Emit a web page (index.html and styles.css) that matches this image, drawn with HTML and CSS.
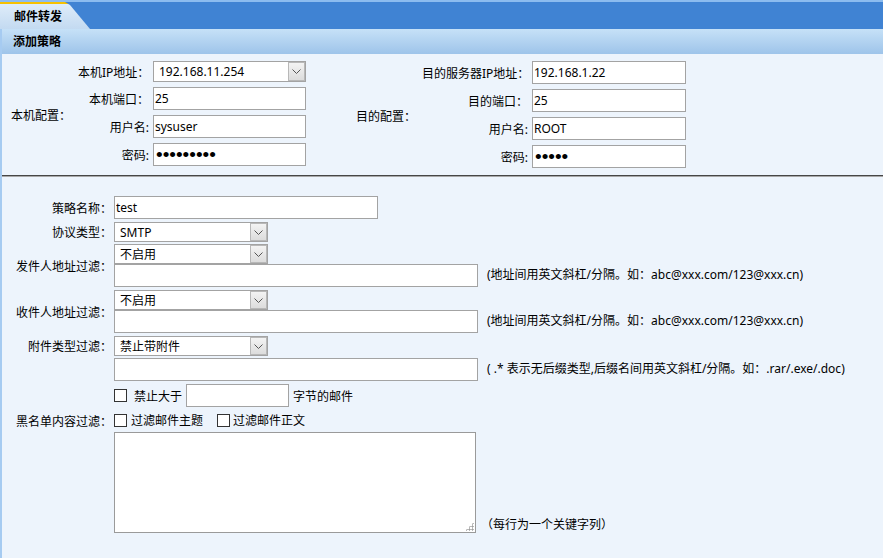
FILE: index.html
```html
<!DOCTYPE html>
<html lang="zh-CN">
<head>
<meta charset="utf-8">
<title>邮件转发</title>
<link rel="stylesheet" href="styles.css">
</head>
<body>
<div class="topbar"><div class="tab">邮件转发</div></div>
<div class="main">
  <div class="caption">添加策略</div>
  <div class="config">
    <div class="group group-local">
      <div class="glabel">本机配置：</div>
      <div class="flabel">本机IP地址：</div>
      <div class="field sel sel-top">
        <span class="sel-val">192.168.11.254</span>
        <span class="sel-btn"><svg width="9" height="5" viewBox="0 0 9 5"><polyline points="0.5,0.5 4.5,4.5 8.5,0.5" fill="none" stroke="#555" stroke-width="1"/></svg></span>
      </div>
      <div class="flabel">本机端口：</div>
      <input class="field in" type="text" value="25">
      <div class="flabel">用户名:</div>
      <input class="field in" type="text" value="sysuser">
      <div class="flabel">密码:</div>
      <input class="field in pw" type="password" value="123456789">
    </div>
    <div class="group group-dest">
      <div class="glabel">目的配置：</div>
      <div class="flabel">目的服务器IP地址：</div>
      <input class="field in" type="text" value="192.168.1.22">
      <div class="flabel">目的端口：</div>
      <input class="field in" type="text" value="25">
      <div class="flabel">用户名:</div>
      <input class="field in" type="text" value="ROOT">
      <div class="flabel">密码:</div>
      <input class="field in pw" type="password" value="12345">
    </div>
  </div>
  <div class="policy">
    <div class="plabel">策略名称：</div>
    <input class="pfield in w264" type="text" value="test">

    <div class="plabel">协议类型：</div>
    <div class="pfield sel w154">
      <span class="sel-val">SMTP</span>
      <span class="sel-btn"><svg width="9" height="5" viewBox="0 0 9 5"><polyline points="0.5,0.5 4.5,4.5 8.5,0.5" fill="none" stroke="#555" stroke-width="1"/></svg></span>
    </div>

    <div class="plabel">发件人地址过滤：</div>
    <div class="pfield stack up1">
      <div class="sel w154">
        <span class="sel-val">不启用</span>
        <span class="sel-btn"><svg width="9" height="5" viewBox="0 0 9 5"><polyline points="0.5,0.5 4.5,4.5 8.5,0.5" fill="none" stroke="#555" stroke-width="1"/></svg></span>
      </div>
      <div class="line">
        <input class="in w364" type="text" value="">
        <span class="hint">(地址间用英文斜杠/分隔。如：abc@xxx.com/123@xxx.cn)</span>
      </div>
    </div>

    <div class="plabel">收件人地址过滤：</div>
    <div class="pfield stack">
      <div class="sel w154">
        <span class="sel-val">不启用</span>
        <span class="sel-btn"><svg width="9" height="5" viewBox="0 0 9 5"><polyline points="0.5,0.5 4.5,4.5 8.5,0.5" fill="none" stroke="#555" stroke-width="1"/></svg></span>
      </div>
      <div class="line">
        <input class="in w364" type="text" value="">
        <span class="hint">(地址间用英文斜杠/分隔。如：abc@xxx.com/123@xxx.cn)</span>
      </div>
    </div>

    <div class="plabel">附件类型过滤：</div>
    <div class="pfield sel w154">
      <span class="sel-val">禁止带附件</span>
      <span class="sel-btn"><svg width="9" height="5" viewBox="0 0 9 5"><polyline points="0.5,0.5 4.5,4.5 8.5,0.5" fill="none" stroke="#555" stroke-width="1"/></svg></span>
    </div>

    <div class="pfield line up1">
      <input class="in w364" type="text" value="">
      <span class="hint">( .* 表示无后缀类型,后缀名间用英文斜杠/分隔。如：.rar/.exe/.doc)</span>
    </div>

    <div class="pfield line">
      <input class="cb" type="checkbox">
      <span class="cb-text-wide">禁止大于</span>
      <input class="in w103 size-in" type="text" value="">
      <span>字节的邮件</span>
    </div>

    <div class="plabel">黑名单内容过滤：</div>
    <div class="pfield line checks">
      <label class="chk"><input class="cb" type="checkbox"><span class="cb-text">过滤邮件主题</span></label>
      <label class="chk chk-second"><input class="cb" type="checkbox"><span class="cb-text">过滤邮件正文</span></label>
    </div>

    <div class="pfield ta-line up1">
      <div class="ta-box"><textarea class="ta"></textarea></div>
      <span class="ta-hint">（每行为一个关键字列）</span>
    </div>
  </div>
</div>
</body>
</html>
```

FILE: styles.css
```css
* { box-sizing: border-box; }
html, body { margin: 0; height: 100%; }
body {
  font: 12px "Noto Sans", "Noto Sans CJK SC", sans-serif;
  color: #000;
  background: #edf4fc;
  display: flex;
  flex-direction: column;
  overflow: hidden;
}

/* top bar with tab */
.topbar {
  flex: none;
  height: 29px;
  border-top: 2px solid #8cbcef;
  background: #4083d3;
}
.tab {
  width: 90px;
  height: 27px;
  border-top: 2px solid #f6c100;
  background: linear-gradient(#deecf9, #c3daf1);
  clip-path: polygon(0 0, 65px 0, 70px 3px, 90px 100%, 0 100%);
  padding-left: 14px;
  line-height: 25px;
  font-weight: bold;
}

.main {
  flex: 1;
  border-left: 2px solid #a6cbf1;
  display: flex;
  flex-direction: column;
}
.caption {
  flex: none;
  height: 25px;
  line-height: 25px;
  padding-left: 11px;
  font-weight: bold;
  background: linear-gradient(#c6e1f7, #9ec4ea);
}

/* top config */
.config {
  display: flex;
  align-items: flex-start;
  padding: 7px 0 7px 9px;
}
.group {
  display: grid;
  column-gap: 4px;
  row-gap: 5px;
  align-items: center;
}
.group-local { grid-template-columns: 63px 71px 153px; }
.group-dest { grid-template-columns: 62px 106px 154px; margin-left: 50px; }
.glabel { grid-column: 1; grid-row: 1 / 5; padding-top: 2px; white-space: nowrap; }
.flabel { grid-column: 2; text-align: right; white-space: nowrap; }
.group .field { grid-column: 3; width: 100%; }

/* controls */
.in {
  display: block;
  height: 23px;
  margin: 0;
  padding: 0 1px;
  border: 1px solid #a3a3a3;
  background: #fff;
  font: 12px "Noto Sans", "Noto Sans CJK SC", sans-serif;
  color: #000;
  outline: none;
}
.pw {
  font-family: "Liberation Sans", sans-serif;
  font-size: 19px;
  letter-spacing: 0;
  padding-left: 2px;
}
.sel {
  display: flex;
  align-items: center;
  height: 20px;
  border: 1px solid #a3a3a3;
  background: #fff;
}
.sel-top { height: 21px; }
.sel-val {
  flex: 1;
  padding-left: 5px;
  white-space: nowrap;
  overflow: hidden;
}
.sel-btn {
  align-self: stretch;
  width: 17px;
  border: 1px solid #b8b8b8;
  background: linear-gradient(#f3f3f3, #dcdcdc);
  display: flex;
  align-items: center;
  justify-content: center;
}
.sel-btn svg { display: block; }

.w264 { width: 264px; }
.w154 { width: 154px; }
.w364 { width: 364px; }
.w103 { width: 103px; }

/* policy section */
.policy {
  border-top: 1px solid #464646;
  box-shadow: inset 0 1px 0 #a8a8a8;
  padding-top: 20px;
  display: grid;
  grid-template-columns: 110px auto;
  column-gap: 2px;
  row-gap: 3px;
  align-items: center;
  justify-items: start;
}
.plabel { grid-column: 1; justify-self: end; white-space: nowrap; }
.pfield { grid-column: 2; }
.up1 { margin-top: -1px; }
.stack { display: flex; flex-direction: column; align-items: flex-start; }
.line { display: flex; align-items: center; white-space: nowrap; }
.hint { margin-left: 9px; margin-bottom: 3px; white-space: nowrap; }

.cb {
  appearance: none;
  -webkit-appearance: none;
  width: 13px;
  height: 13px;
  margin: 0;
  border: 1px solid #333;
  background: #fff;
  flex: none;
}
.cb-text-wide { margin-left: 7px; }
.size-in { margin: 0 4px; }
.checks { height: 20px; margin-bottom: 2px; }
.chk { display: flex; align-items: center; }
.cb-text { margin-left: 4px; }
.chk-second { margin-left: 14px; }
.chk-second .cb-text { margin-left: 3px; }

.ta-line { display: flex; align-items: flex-end; margin-top: -3px; }
.ta-box { position: relative; }
.ta {
  display: block;
  width: 362px;
  height: 101px;
  margin: 0;
  border: 1px solid #9a9a9a;
  background: #fff;
  resize: none;
  outline: none;
}
.ta-box::after {
  content: "";
  position: absolute;
  right: 2px;
  bottom: 2px;
  width: 9px;
  height: 9px;
  background: radial-gradient(circle, #a0a0a0 0.9px, transparent 1.3px) 0 0 / 3px 3px;
  clip-path: polygon(100% 0, 100% 100%, 0 100%);
}
.ta-hint { margin-left: 5px; margin-bottom: 1px; line-height: 14px; white-space: nowrap; }
```
